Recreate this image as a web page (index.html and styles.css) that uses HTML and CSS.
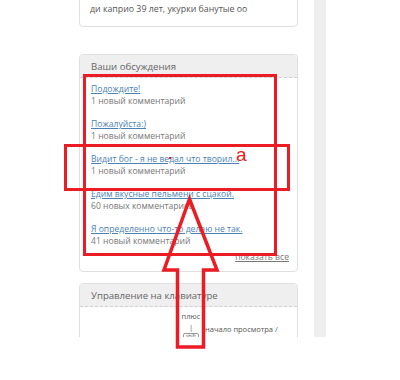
FILE: index.html
```
<!DOCTYPE html>
<html>
<head>
  <title>Ваши обсуждения</title>
  <link rel="stylesheet" href="styles.css">
</head>
<body>
  <div class="screen">
    <div class="column">
      <div class="box box-top">
        <div class="cut"><a href="#">2015 - банутые, за чем надо</a> ↑</div>
        <div class="plain">ди каприо 39 лет, укурки банутые оо</div>
      </div>

      <div class="box box-talks">
        <div class="box-head">Ваши обсуждения</div>
        <div class="box-body">
          <div class="talk">
            <a href="#">Подождите!</a>
            <div class="count">1 новый комментарий</div>
          </div>
          <div class="talk">
            <a href="#">Пожалуйста:)</a>
            <div class="count">1 новый комментарий</div>
          </div>
          <div class="talk">
            <a href="#">Видит бог - я не ведал что творил...</a>
            <div class="count">1 новый комментарий</div>
          </div>
          <div class="talk">
            <a href="#">Едим вкусные пельмени с сцакой.</a>
            <div class="count">60 новых комментариев</div>
          </div>
          <div class="talk">
            <a href="#">Я определенно что-то делаю не так.</a>
            <div class="count">41 новый комментарий</div>
          </div>
          <div class="show-all"><a href="#">показать все</a></div>
        </div>
      </div>

      <div class="box box-keys">
        <div class="box-head">Управление на клавиатуре</div>
        <div class="keys">
          <div class="key-col">
            <span class="key-name">плюс</span>
            <span class="key-bar">|</span>
            <span class="key-cap">shift</span>
          </div>
          <div class="key-text">начало просмотра /<br>конец просмотра</div>
        </div>
      </div>
    </div>
    <div class="strip"></div>
  </div>

  <svg class="marks" width="400" height="380" viewBox="0 0 400 380">
    <rect x="84.5" y="75.5" width="191" height="179" fill="none" stroke="#ec1c24" stroke-width="3"/>
    <rect x="65.5" y="145.5" width="223" height="44" fill="none" stroke="#ec1c24" stroke-width="3"/>
    <polygon points="189.5,199 164,270 177.5,270 177.5,347 203.5,347 203.5,270 217,270" fill="none" stroke="#ec1c24" stroke-width="3.5" stroke-linejoin="miter"/>
    <rect x="169" y="157" width="2" height="2" fill="#ec1c24"/>
    <text x="236" y="161" class="mark-letter">а</text>
  </svg>
</body>
</html>
```

FILE: styles.css
```
body {
  margin: 0;
  font-family: "Open Sans", Arial, sans-serif;
  background: #fff;
}
a {
  color: #4a82b4;
}
.screen {
  display: flex;
  height: 337px;
  overflow: hidden;
}
.column {
  width: 219px;
  margin-left: 79px;
}
.box {
  border: 1px solid #e0e0e0;
  border-radius: 4px;
  background: #fff;
  box-sizing: border-box;
}
.box-top {
  margin-top: -18px;
  padding: 2px 10px 9px 10px;
  font-size: 8.8px;
  line-height: 16px;
  color: #555;
}
.box-top .cut a {
  text-decoration: none;
}
.box-talks {
  margin-top: 27px;
  height: 218px;
}
.box-keys {
  margin-top: 11px;
  height: 80px;
}
.box-head {
  background: #efefef;
  border-bottom: 1px dashed #d0d0d0;
  border-radius: 4px 4px 0 0;
  height: 22px;
  padding-left: 11px;
  font-size: 9.6px;
  line-height: 24px;
  color: #666;
}
.box-body {
  padding: 5px 11px 0 11px;
}
.talk {
  font-size: 8.6px;
  line-height: 12px;
  margin-bottom: 11px;
}
.count {
  color: #777;
}
.show-all {
  text-align: right;
  font-size: 8.6px;
  line-height: 12px;
  margin-top: -7px;
  margin-right: -3px;
}
.show-all a {
  color: #777;
}
.keys {
  display: flex;
  padding: 5px 0 0 98px;
  font-size: 7.5px;
  color: #555;
}
.key-col {
  display: flex;
  flex-direction: column;
  align-items: center;
  width: 26px;
  line-height: 8px;
}
.key-bar {
  margin-top: 3px;
}
.key-cap {
  border: 1px solid #999;
  border-radius: 2px;
  font-size: 5px;
  line-height: 5px;
  padding: 0 2px;
  margin-top: 2px;
}
.key-text {
  font-size: 7.5px;
  line-height: 11px;
  margin-top: 12px;
  margin-left: 1px;
}
.strip {
  width: 12px;
  margin-left: 16px;
  background: #efefef;
}
.marks {
  position: absolute;
  left: 0;
  top: 0;
  pointer-events: none;
}
.mark-letter {
  font-family: "Liberation Sans", Arial, sans-serif;
  font-size: 19px;
  fill: #ec1c24;
}
```
